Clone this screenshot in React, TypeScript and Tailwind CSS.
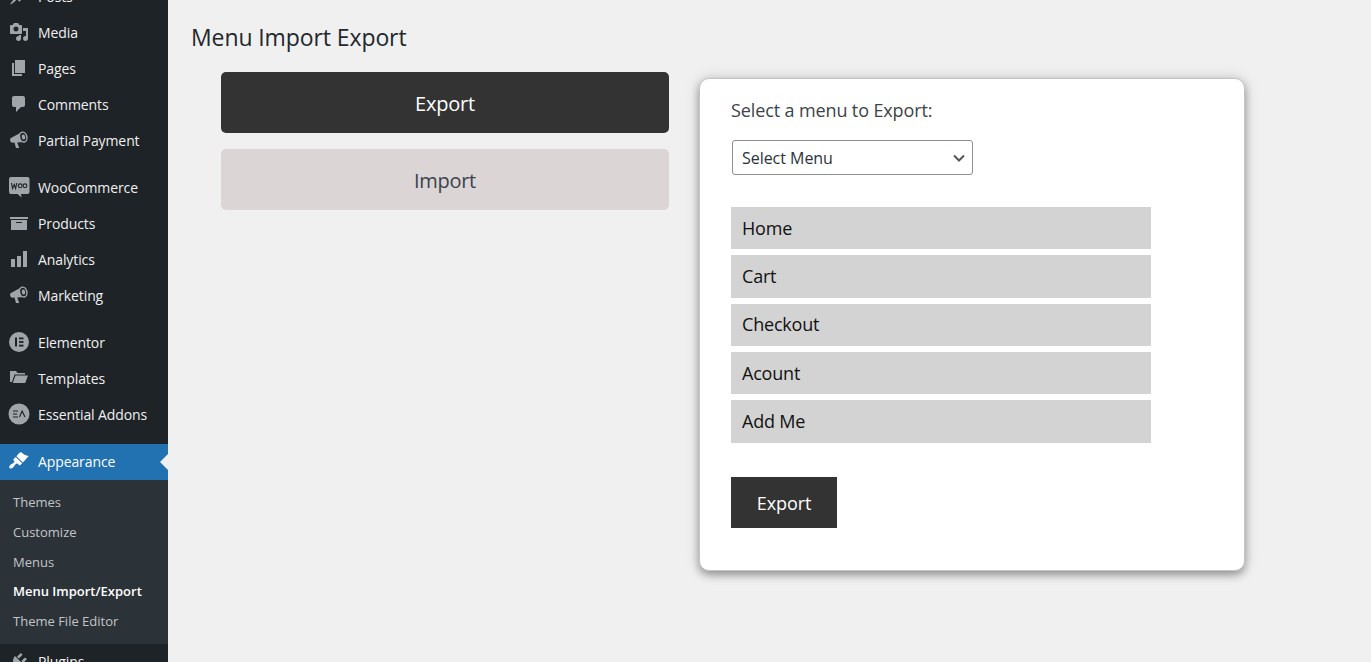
import React from "react";

const paths: Record<string, string> = {
  posts: "M10.44 3.02l1.82-1.82 6.36 6.35-1.83 1.82c-1.05-.68-2.48-.57-3.41.36l-.75.75c-.92.93-1.04 2.35-.35 3.41l-1.83 1.82-2.41-2.41-2.8 2.79c-.42.42-3.38 2.71-3.8 2.29s1.86-3.39 2.28-3.81l2.79-2.79L4.1 9.36l1.83-1.82c1.05.69 2.48.57 3.4-.36l.75-.75c.93-.92 1.05-2.35.36-3.41z",
  media: "M13 11V4c0-.55-.45-1-1-1h-1.67L9 1H5L3.67 3H2c-.55 0-1 .45-1 1v7c0 .55.45 1 1 1h10c.55 0 1-.45 1-1zM7 4.5c1.38 0 2.5 1.12 2.5 2.5S8.38 9.5 7 9.5 4.5 8.38 4.5 7 5.62 4.5 7 4.5zM14 6h5v10.5c0 1.38-1.12 2.5-2.5 2.5S14 17.88 14 16.5s1.12-2.5 2.5-2.5c.17 0 .34.02.5.05V9h-3V6zm-4 8.05V13h2v3.5c0 1.38-1.12 2.5-2.5 2.5S7 17.88 7 16.5 8.12 14 9.5 14c.17 0 .34.02.5.05z",
  pages: "M6 15V2h10v13H6zm-1 1h8v2H3V5h2v11z",
  comments: "M5 2h9c1.1 0 2 .9 2 2v7c0 1.1-.9 2-2 2h-2l-5 5v-5H5c-1.1 0-2-.9-2-2V4c0-1.1.9-2 2-2z",
  archive: "M19 4v2H1V4h18zM2 7h16v10H2V7zm11 3V9H7v1h6z",
  chart: "M18 18V2h-4v16h4zm-6 0V7H8v11h4zm-6 0v-8H2v8h4z",
  folder: "M1 14V3h6l1.5 2H16v1.5H5.5L3 14zM3.8 15l2.6-7.5H19L16.2 15z",
  plugins: "M13.11 4.36L9.87 7.6 8 5.73l3.24-3.24c.35-.34 1.05-.2 1.56.32.52.51.66 1.21.31 1.55zm-8 1.77l.91-1.12 9.01 9.01-1.19.84c-.71.71-2.63 1.16-3.82 1.16H6.14L4.9 17.26c-.59.59-1.54.59-2.12 0-.59-.58-.59-1.53 0-2.12l1.24-1.24v-3.88c0-1.13.4-3.19 1.09-3.89zm7.26 3.97l3.24-3.24c.34-.35 1.04-.21 1.55.31.52.51.66 1.21.31 1.55l-3.24 3.25z",
};

function Icon({ name, white }: { name: string; white?: boolean }) {
  const color = white ? "#ffffff" : "#a0a5aa";
  return (
    <svg viewBox="0 0 20 20" className="w-5 h-5 shrink-0 overflow-visible">
      {name === "woo" ? (
        <>
          <path fill={color} d="M2 0h16.5a2 2 0 0 1 2 2v13a2 2 0 0 1-2 2H12l.6 3.5L8.500 17H2a2 2 0 0 1-2-2V2a2 2 0 0 1 2-2z" />
          <path fill="none" stroke="#1d2327" strokeWidth="1.1" d="M2.500 6l1.100 5.500 1.700-4 1.300 4L7.800 6" />
          <circle cx="11.200" cy="8.800" r="1.900" fill="none" stroke="#1d2327" strokeWidth="1.100" />
          <circle cx="16" cy="8.800" r="1.900" fill="none" stroke="#1d2327" strokeWidth="1.100" />
        </>
      ) : name === "megaphone" ? (
        <>
          <path fill={color} d="M1.500 8.200L12 2.500l2.500 9.500-6.300.6 2 5.400H7l-1.500-5.500-2 .2C1.600 12.800 .4 9.800 1.500 8.200z" />
          <ellipse cx="14.300" cy="7.100" rx="4.300" ry="5.700" transform="rotate(-14 14.300 7.100)" fill={color} />
          <ellipse cx="14.200" cy="7.100" rx="2.900" ry="4.300" transform="rotate(-14 14.200 7.100)" fill="#1d2327" />
          <ellipse cx="14.500" cy="7" rx="1.700" ry="2.600" transform="rotate(-14 14.500 7)" fill={color} />
        </>
      ) : name === "elementor" ? (
        <>
          <circle cx="10" cy="10" r="10" fill={color} />
          <rect x="6" y="5.500" width="2" height="9" fill="#1d2327" />
          <rect x="10" y="5.500" width="4.500" height="1.800" fill="#1d2327" />
          <rect x="10" y="9.100" width="4.500" height="1.800" fill="#1d2327" />
          <rect x="10" y="12.700" width="4.500" height="1.800" fill="#1d2327" />
        </>
      ) : name === "ea" ? (
        <>
          <circle cx="10" cy="10" r="10.500" fill={color} />
          <path fill="none" stroke="#1d2327" strokeWidth="1.100" d="M9 7H4M8 10H4M9 13H4M10.500 13l2.600-6 2.900 6" />
        </>
      ) : name === "appearance" ? (
        <>
          <path fill={color} d="M12.700 1.600c1.800 1.600 3.600 3 7 3.400l-5.800 6.600L7.400 5.300 9.500 2.800c.8-1 2.200-2 3.200-1.200z" />
          <path fill={color} d="M6.700 6l6.500 6.300-1.800 1.800c-.4.4-1 .4-1.400 0L8.600 12.700c-.6-.5-1.300-.3-1.800.3-1.300 1.500-2.700 4.400-4.700 4.600-1.300.1-2.100-1-1.800-2.200.5-1.800 3.200-2.800 4.600-4 .6-.5.700-1.200.2-1.700L4.100 8.700z" />
        </>
      ) : (
        <path fill={color} d={paths[name]} />
      )}
    </svg>
  );
}

function Item({ icon, label }: { icon: string; label: string }) {
  return (
    <div className="h-9 pb-[2px] flex items-center pl-[9px] gap-[9px] text-[14px] text-[#f0f0f1] tracking-[-0.1px]">
      <Icon name={icon} />
      <span>{label}</span>
    </div>
  );
}

const menuRows = ["Home", "Cart", "Checkout", "Acount", "Add Me"];

export default function App() {
  return (
    <div className="flex h-screen overflow-hidden bg-[#f0f0f0] font-['Open_Sans',sans-serif]">
      <aside className="w-[168px] shrink-0 bg-[#1d2327] -mt-[21px] pb-[21px] overflow-hidden">
        <Item icon="posts" label="Posts" />
        <Item icon="media" label="Media" />
        <Item icon="pages" label="Pages" />
        <Item icon="comments" label="Comments" />
        <Item icon="megaphone" label="Partial Payment" />
        <div className="h-[11px]" />
        <Item icon="woo" label="WooCommerce" />
        <Item icon="archive" label="Products" />
        <Item icon="chart" label="Analytics" />
        <Item icon="megaphone" label="Marketing" />
        <div className="h-[11px]" />
        <Item icon="elementor" label="Elementor" />
        <Item icon="folder" label="Templates" />
        <Item icon="ea" label="Essential Addons" />
        <div className="h-[11px]" />
        <div className="relative h-9 pb-[2px] flex items-center pl-[9px] gap-[9px] bg-[#2271b1] text-[14px] text-white tracking-[-0.1px]">
          <Icon name="appearance" white />
          <span>Appearance</span>
          <div className="absolute right-0 top-[10px] w-0 h-0 border-y-[8px] border-y-transparent border-r-[8px] border-r-[#f0f0f0]" />
        </div>
        <div className="bg-[#2c3338] h-[164px] pt-[8px] text-[13px] tracking-[0px] text-[#c3c4c7]">
          <div className="h-[30px] flex items-center pl-[13px]">Themes</div>
          <div className="h-[30px] flex items-center pl-[13px]">Customize</div>
          <div className="h-[29px] flex items-center pl-[13px]">Menus</div>
          <div className="h-[30px] flex items-center pl-[13px] font-semibold text-white">Menu Import/Export</div>
          <div className="h-[30px] flex items-center pl-[13px]">Theme File Editor</div>
        </div>
        <Item icon="plugins" label="Plugins" />
      </aside>

      <main className="flex-1 pl-[23px] text-[#2c3338]">
        <h1 className="h-[72px] pt-[19px] text-[23px] leading-[36px] tracking-[-0.1px] text-[#23282d]">Menu Import Export</h1>
        <div className="flex items-start">
          <div className="w-[448px] ml-[30px] flex flex-col gap-4">
            <button className="h-[61px] pt-[2px] rounded-[5px] bg-[#333333] text-white text-[20px] tracking-[-0.2px]">Export</button>
            <button className="h-[61px] pt-[2px] rounded-[5px] bg-[#dbd5d5] text-[#3c434a] text-[20px] tracking-[-0.3px]">Import</button>
          </div>
          <section className="ml-[30px] mt-[6px] w-[546px] h-[493px] rounded-[10px] border border-[#c4c4c4] bg-white pl-[31px] shadow-[0_4px_8px_rgba(0,0,0,0.35),0_0_16px_rgba(0,0,0,0.12)]">
            <p className="pt-[18px] h-[61px] text-[18px] leading-[26px] tracking-[-0.12px] text-[#3c434a]">Select a menu to Export:</p>
            <div className="relative ml-px w-[241px] h-[35px] rounded-[3px] border border-[#8c8f94] flex items-center pl-[9px] text-[16px] tracking-[-0.04px] text-[#2c3338]">
              Select Menu
              <svg viewBox="0 0 20 20" className="absolute right-[3px] top-[7px] w-[20px] h-[20px]">
                <path d="M5 7.500l5 5 5-5" fill="none" stroke="#50575e" strokeWidth="2" />
              </svg>
            </div>
            <div className="mt-[32px] w-[420px] flex flex-col gap-[6px]">
              {menuRows.map((row) => (
                <div key={row} className="h-[42.35px] bg-[#d3d3d3] flex items-center pl-[11px] text-[18px] tracking-[-0.2px] text-[#111111]">{row}</div>
              ))}
            </div>
            <button className="mt-[34.25px] w-[106px] h-[51px] pt-[2px] bg-[#333333] text-white text-[18px] tracking-[-0.1px]">Export</button>
          </section>
        </div>
      </main>
    </div>
  );
}
